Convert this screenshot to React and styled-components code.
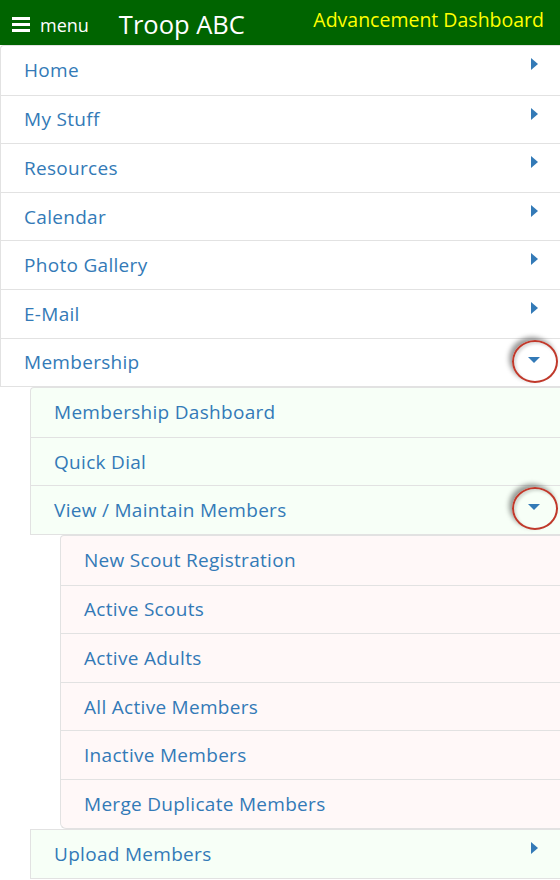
import React from "react";
import styled, { createGlobalStyle } from "styled-components";

const Global = createGlobalStyle`
  html, body { margin: 0; padding: 0; background: #fff; }
  body { font-family: "Open Sans", "Noto Sans", sans-serif; width: 560px; overflow: hidden; }
  * { box-sizing: border-box; }
`;

const Header = styled.header`
  height: 45px;
  background: #006400;
  display: flex;
  align-items: center;
  padding: 0 16px 0 12px;
  color: #fff;
`;

const MenuBtn = styled.div`
  display: flex;
  align-items: center;
  gap: 10px;
  font-size: 18px;
  margin-right: 30px;
  margin-top: 4px;
`;

const Burger = styled.span`
  display: flex;
  flex-direction: column;
  gap: 3px;
  span { display: block; width: 18px; height: 3px; background: #fff; }
`;

const Troop = styled.div`
  font-size: 25.5px;
  margin-top: 2px;
`;

const Dash = styled.div`
  margin-left: auto;
  color: #ffff00;
  font-size: 19.5px;
  margin-top: -7px;
`;

const List = styled.ul`
  list-style: none;
  margin: 0 0 0 ${p => p.$indent}px;
  padding: 0;
  background: ${p => p.$bg};
  border: 1px solid #e2e2e2;
  border-right: none;
  border-radius: ${p => p.$radius};
`;

const Row = styled.li`
  height: 48.6px;
  display: flex;
  align-items: center;
  padding: 0 22px 0 23px;
  color: #337ab7;
  font-size: 19px;
  letter-spacing: 0.3px;
  position: relative;
  & + & { border-top: 1px solid #e2e2e2; }
`;

const Label = styled.span`
  flex: 1;
`;

const Arrow = styled.span`
  width: 0;
  height: 0;
  align-self: flex-start;
  margin-top: 12px;
  ${p => p.$down
    ? `border-left: 6px solid transparent; border-right: 6px solid transparent; border-top: 6px solid #337ab7; margin-top: 18px; margin-right: -2px;`
    : `border-top: 6px solid transparent; border-bottom: 6px solid transparent; border-left: 7px solid #337ab7;`}
`;

const Ring = styled.span`
  position: absolute;
  right: 2px;
  top: 1px;
  width: 46px;
  height: 43px;
  border-radius: 50%;
  border: 2.5px solid #c0392b;
  box-shadow: -3px -3px 5px rgba(0,0,0,0.4), inset 2px 2px 3px rgba(0,0,0,0.15);
`;

const Item = ({ children, arrow, down, ring }) => (
  <Row>
    <Label>{children}</Label>
    {arrow && <Arrow $down={down} />}
    {ring && <Ring />}
  </Row>
);

export default function App() {
  return (
    <>
      <Global />
      <Header>
        <MenuBtn>
          <Burger><span /><span /><span /></Burger>
          menu
        </MenuBtn>
        <Troop>Troop ABC</Troop>
        <Dash>Advancement Dashboard</Dash>
      </Header>
      <List $indent={0} $bg="#fff" $radius="4px 0 0 0">
        <Item arrow>Home</Item>
        <Item arrow>My Stuff</Item>
        <Item arrow>Resources</Item>
        <Item arrow>Calendar</Item>
        <Item arrow>Photo Gallery</Item>
        <Item arrow>E-Mail</Item>
        <Item arrow down ring>Membership</Item>
      </List>
      <List $indent={30} $bg="#f7fff7" $radius="4px 0 0 0">
        <Item>Membership Dashboard</Item>
        <Item>Quick Dial</Item>
        <Item arrow down ring>View / Maintain Members</Item>
      </List>
      <List $indent={60} $bg="#fff8f8" $radius="4px 0 0 6px">
        <Item>New Scout Registration</Item>
        <Item>Active Scouts</Item>
        <Item>Active Adults</Item>
        <Item>All Active Members</Item>
        <Item>Inactive Members</Item>
        <Item>Merge Duplicate Members</Item>
      </List>
      <List $indent={30} $bg="#f7fff7" $radius="0">
        <Item arrow>Upload Members</Item>
      </List>
    </>
  );
}
